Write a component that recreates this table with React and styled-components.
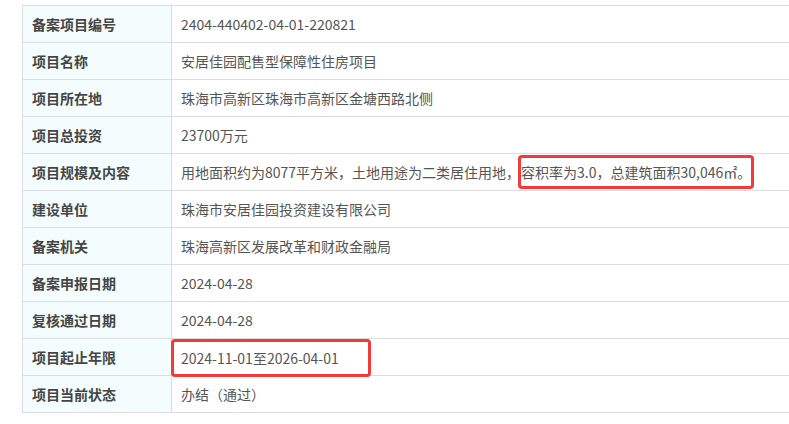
import React from 'react';
import styled, { createGlobalStyle } from 'styled-components';

const GlobalStyle = createGlobalStyle`
  html, body {
    margin: 0;
    padding: 0;
    background: #fff;
    overflow: hidden;
  }
  body {
    font-family: "Noto Sans CJK SC", "Noto Sans", sans-serif;
  }
`

const Page = styled.div`
  padding: 5px 0 0 22px;
  width: 800px;
`

const Table = styled.table`
  width: 100%;
  border-collapse: collapse;
  border: 1px solid #dcdcdc;
  border-right: none;
  font-size: 14px;
`

const Row = styled.tr`
  height: 37px;
`

const Label = styled.th`
  width: 139px;
  padding: 0 0 0 9px;
  border: 1px solid #dcdcdc;
  background: #f4fdfd;
  color: #454545;
  font-weight: bold;
  text-align: left;
  white-space: nowrap;
`

const Value = styled.td`
  padding: ${props => (props.flush ? '0' : '0 0 0 9px')};
  border: 1px solid #dcdcdc;
  border-right: none;
  color: #555;
  white-space: nowrap;
`

const InlineMark = styled.span`
  display: inline-block;
  margin: -4px 0 -4px -2px;
  padding: 3px 0 2px 0;
  border: 3px solid #f33a3a;
  border-radius: 4px;
  line-height: 23px;
`

const BlockMark = styled.div`
  position: relative;
  z-index: 1;
  display: flex;
  align-items: center;
  width: fit-content;
  height: 38px;
  box-sizing: border-box;
  margin: 0 0 -2px -1px;
  padding: 0 29px 0 7px;
  border: 3px solid #f33a3a;
  border-radius: 4px;
`

const rows = [
  ['备案项目编号', '2404-440402-04-01-220821'],
  ['项目名称', '安居佳园配售型保障性住房项目'],
  ['项目所在地', '珠海市高新区珠海市高新区金塘西路北侧'],
  ['项目总投资', '23700万元'],
  ['项目规模及内容', 'scale'],
  ['建设单位', '珠海市安居佳园投资建设有限公司'],
  ['备案机关', '珠海高新区发展改革和财政金融局'],
  ['备案申报日期', '2024-04-28'],
  ['复核通过日期', '2024-04-28'],
  ['项目起止年限', 'period'],
  ['项目当前状态', '办结（通过）'],
]

const renderValue = value => {
  if (value === 'scale') {
    return (
      <Value>
        用地面积约为8077平方米，土地用途为二类居住用地，
        <InlineMark>容积率为3.0，总建筑面积30,046㎡。</InlineMark>
      </Value>
    )
  }
  if (value === 'period') {
    return (
      <Value flush>
        <BlockMark>2024-11-01至2026-04-01</BlockMark>
      </Value>
    )
  }
  return <Value>{value}</Value>
}

export default function App() {
  return (
    <Page>
      <GlobalStyle />
      <Table>
        <tbody>
          {rows.map(([label, value]) => (
            <Row key={label}>
              <Label>{label}</Label>
              {renderValue(value)}
            </Row>
          ))}
        </tbody>
      </Table>
    </Page>
  )
}
